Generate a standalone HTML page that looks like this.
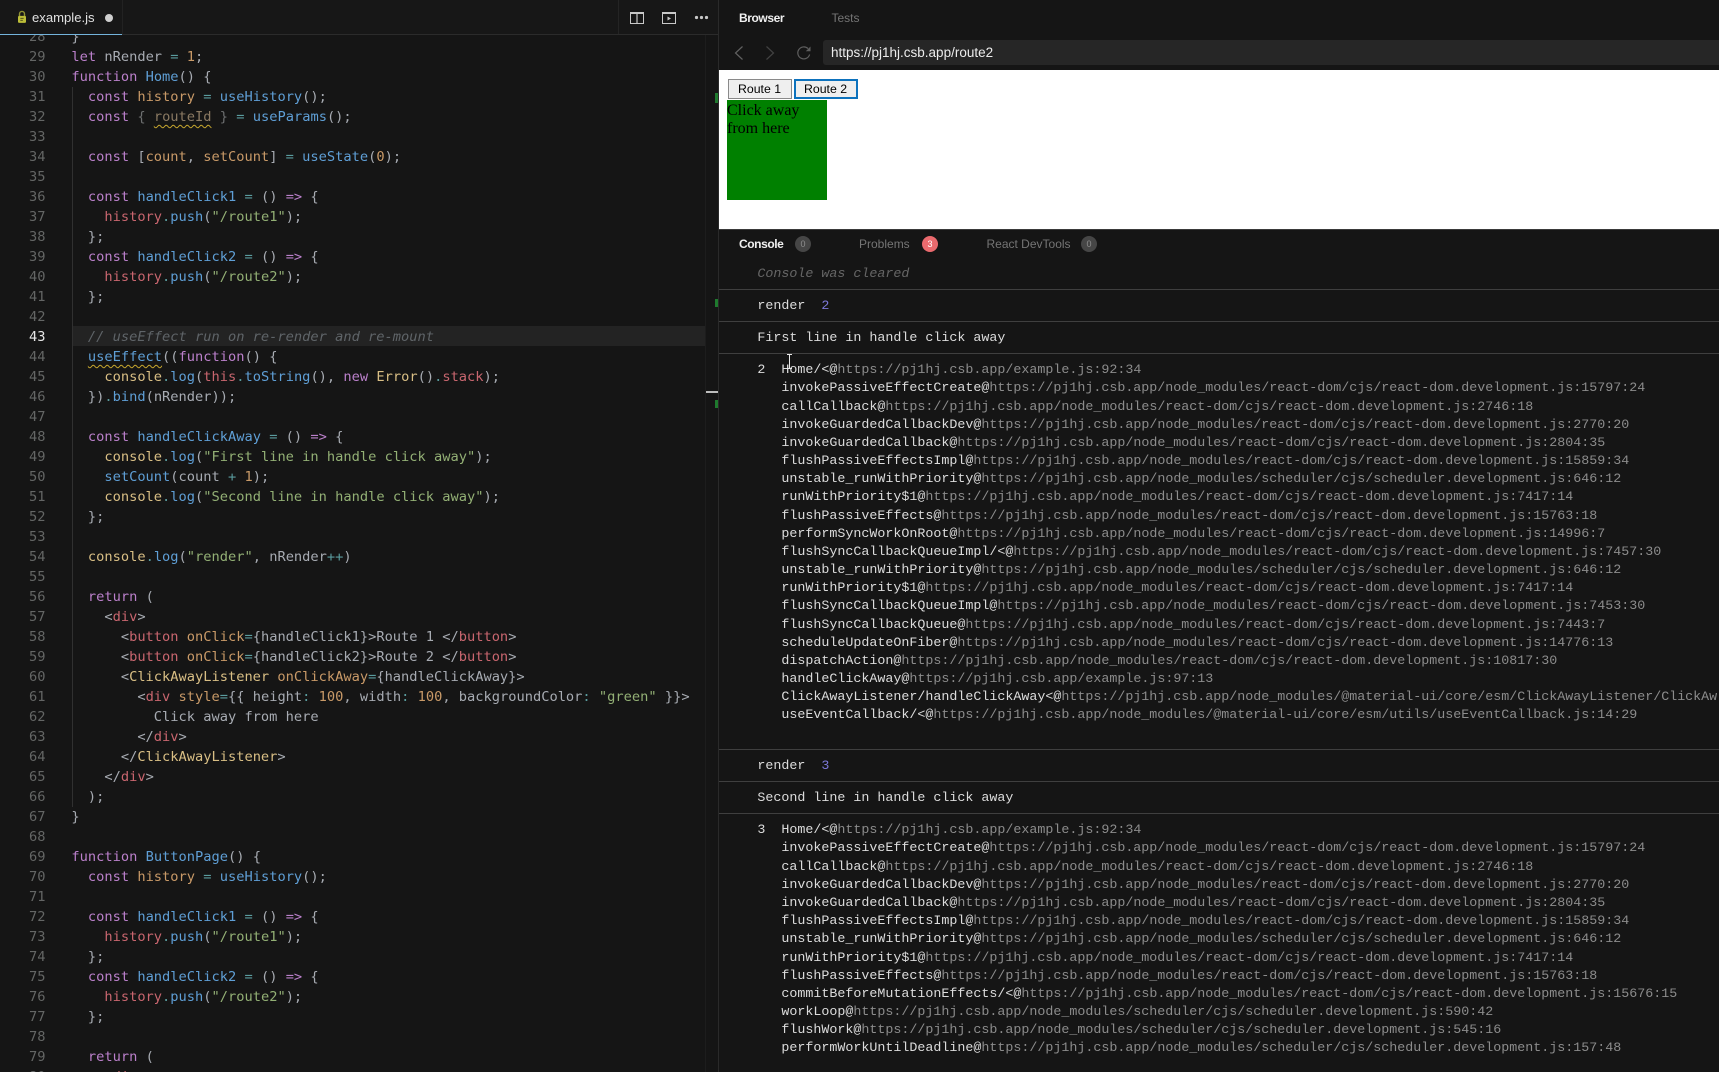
<!DOCTYPE html>
<html lang="en"><head><meta charset="utf-8"><title>example.js</title>
<style>
html,body{margin:0;padding:0;width:1719px;height:1072px;overflow:hidden;background:#151515}
body{position:relative}
*{box-sizing:border-box}
.abs{position:absolute}
#nums,#code{position:absolute;top:27px;font:13.7px/20px "DejaVu Sans Mono","Liberation Mono",monospace}
#nums{left:0;width:45.5px;text-align:right;color:#646665}
#nums div,#code div{height:20px;white-space:pre}
#code{left:71.4px;color:#a7abb2}
#clip{position:absolute;left:0;top:35px;width:705px;height:1037px;overflow:hidden}
#inner{position:absolute;left:0;top:-35px;width:705px;height:1072px}
.k{color:#bb80cb}.f{color:#5f9fd6}.v{color:#c99a68}.s{color:#93b075}.r{color:#c9666f}.y{color:#d9bf85}.o{color:#5a9c9e}.c{color:#5f6468;font-style:italic}
.w{text-decoration:underline wavy #c9a82e 1px;text-underline-offset:3px}
.con{position:absolute;left:757.4px;font:13.33px/18.17px "Liberation Mono",monospace;color:#dcdcdc;white-space:pre}
.stack{position:absolute;left:781.4px;font:13.33px/18.17px "Liberation Mono",monospace;color:#dcdcdc;white-space:pre;width:937px;overflow:hidden}
.stack a{color:#8c8c8c}
.sep{position:absolute;left:719px;width:1000px;height:1px;background:#3f3f3f}
.tab{position:absolute;font:12px/14px "Liberation Sans",sans-serif;color:#757575;white-space:pre}
.tab.on{color:#f0f0f0;font-weight:700;letter-spacing:-.42px}
.bdg{position:absolute;width:16px;height:16px;border-radius:50%;background:#464646;color:#8e8e8e;font:9px/16px "Liberation Sans",sans-serif;text-align:center;top:236px}
</style></head>
<body>
<!-- editor header -->
<div class="abs" style="left:0;top:0;width:719px;height:34px;background:#171717"></div>
<div class="abs" style="left:0;top:34px;width:719px;height:1px;background:#2b2b2b"></div>
<div class="abs" style="left:0;top:34px;width:122px;height:1px;background:#74b4dc"></div>
<div class="abs" style="left:122px;top:0;width:1px;height:34px;background:#222"></div>
<div class="abs" style="left:618px;top:0;width:1px;height:34px;background:#242424"></div>
<svg class="abs" style="left:17px;top:10px" width="10" height="15" viewBox="0 0 12 17"><path d="M3 7V4.2a3 3 0 0 1 6 0V7" fill="none" stroke="#8f9234" stroke-width="1.7"/><rect x="1.2" y="6.5" width="9.6" height="8.5" rx="1.5" fill="#bcbd38"/><path d="M4 9.5h4M4 12h3" stroke="#55561c" stroke-width="1.2"/></svg>
<div class="abs" style="left:32px;top:10px;font:13.1px/16px 'Liberation Sans',sans-serif;color:#e0e0e0">example.js</div>
<div class="abs" style="left:105px;top:14px;width:8px;height:8px;border-radius:50%;background:#cfcfcf"></div>
<svg class="abs" style="left:630px;top:12px" width="14" height="12" viewBox="0 0 14 12"><rect x=".5" y="1" width="13" height="10.5" fill="none" stroke="#c8c8c8"/><rect y="0" width="14" height="2" fill="#c8c8c8"/><path d="M7 1v10.5" stroke="#c8c8c8" stroke-width="1.2"/></svg>
<svg class="abs" style="left:662px;top:12px" width="14" height="12" viewBox="0 0 14 12"><rect x=".5" y="1" width="13" height="10.5" fill="none" stroke="#c8c8c8"/><rect y="0" width="14" height="2" fill="#c8c8c8"/><path d="M5.5 4.5l3.5 2-3.5 2z" fill="#c8c8c8"/></svg>
<svg class="abs" style="left:694px;top:15px" width="15" height="5" viewBox="0 0 15 5"><circle cx="2.5" cy="2.5" r="1.6" fill="#c8c8c8"/><circle cx="7.5" cy="2.5" r="1.6" fill="#c8c8c8"/><circle cx="12.5" cy="2.5" r="1.6" fill="#c8c8c8"/></svg>

<!-- code area -->
<div id="clip"><div id="inner">
<div class="abs" style="left:72px;top:326px;width:646px;height:20px;background:#232323"></div>
<div class="abs" style="left:72px;top:87px;width:1px;height:720px;background:#303030"></div>
<div id="nums"><div>28</div><div>29</div><div>30</div><div>31</div><div>32</div><div>33</div><div>34</div><div>35</div><div>36</div><div>37</div><div>38</div><div>39</div><div>40</div><div>41</div><div>42</div><div style="color:#e6e6e6">43</div><div>44</div><div>45</div><div>46</div><div>47</div><div>48</div><div>49</div><div>50</div><div>51</div><div>52</div><div>53</div><div>54</div><div>55</div><div>56</div><div>57</div><div>58</div><div>59</div><div>60</div><div>61</div><div>62</div><div>63</div><div>64</div><div>65</div><div>66</div><div>67</div><div>68</div><div>69</div><div>70</div><div>71</div><div>72</div><div>73</div><div>74</div><div>75</div><div>76</div><div>77</div><div>78</div><div>79</div><div>80</div></div>
<div id="code"><div>}</div>
<div><span class="k">let</span> nRender <span class="o">=</span> <span class="v">1</span>;</div>
<div><span class="k">function</span> <span class="f">Home</span>() {</div>
<div>  <span class="k">const</span> <span class="v">history</span> <span class="o">=</span> <span class="f">useHistory</span>();</div>
<div>  <span class="k">const</span> <span style="color:#6d6f70">{</span> <span class="w" style="color:#8b7a63">routeId</span> <span style="color:#6d6f70">}</span> <span class="o">=</span> <span class="f">useParams</span>();</div>
<div> </div>
<div>  <span class="k">const</span> [<span class="v">count</span>, <span class="v">setCount</span>] <span class="o">=</span> <span class="f">useState</span>(<span class="v">0</span>);</div>
<div> </div>
<div>  <span class="k">const</span> <span class="f">handleClick1</span> <span class="o">=</span> () <span class="k">=&gt;</span> {</div>
<div>    <span class="r">history</span><span class="o">.</span><span class="f">push</span>(<span class="s">"/route1"</span>);</div>
<div>  };</div>
<div>  <span class="k">const</span> <span class="f">handleClick2</span> <span class="o">=</span> () <span class="k">=&gt;</span> {</div>
<div>    <span class="r">history</span><span class="o">.</span><span class="f">push</span>(<span class="s">"/route2"</span>);</div>
<div>  };</div>
<div> </div>
<div>  <span class="c">// useEffect run on re-render and re-mount</span></div>
<div>  <span class="f w">useEffect</span>((<span class="k">function</span>() {</div>
<div>    <span class="y">console</span><span class="o">.</span><span class="f">log</span>(<span class="r">this</span><span class="o">.</span><span class="f">toString</span>(), <span class="k">new</span> <span class="y">Error</span>()<span class="o">.</span><span class="r">stack</span>);</div>
<div>  })<span class="o">.</span><span class="f">bind</span>(nRender));</div>
<div> </div>
<div>  <span class="k">const</span> <span class="f">handleClickAway</span> <span class="o">=</span> () <span class="k">=&gt;</span> {</div>
<div>    <span class="y">console</span><span class="o">.</span><span class="f">log</span>(<span class="s">"First line in handle click away"</span>);</div>
<div>    <span class="f">setCount</span>(count <span class="o">+</span> <span class="v">1</span>);</div>
<div>    <span class="y">console</span><span class="o">.</span><span class="f">log</span>(<span class="s">"Second line in handle click away"</span>);</div>
<div>  };</div>
<div> </div>
<div>  <span class="y">console</span><span class="o">.</span><span class="f">log</span>(<span class="s">"render"</span>, nRender<span class="o">++</span>)</div>
<div> </div>
<div>  <span class="k">return</span> (</div>
<div>    &lt;<span class="r">div</span>&gt;</div>
<div>      &lt;<span class="r">button</span> <span class="v">onClick</span><span class="o">=</span>{handleClick1}&gt;Route 1 &lt;/<span class="r">button</span>&gt;</div>
<div>      &lt;<span class="r">button</span> <span class="v">onClick</span><span class="o">=</span>{handleClick2}&gt;Route 2 &lt;/<span class="r">button</span>&gt;</div>
<div>      &lt;<span class="y">ClickAwayListener</span> <span class="v">onClickAway</span><span class="o">=</span>{handleClickAway}&gt;</div>
<div>        &lt;<span class="r">div</span> <span class="v">style</span><span class="o">=</span>{{ height<span class="o">:</span> <span class="v">100</span>, width<span class="o">:</span> <span class="v">100</span>, backgroundColor<span class="o">:</span> <span class="s">"green"</span> }}&gt;</div>
<div>          Click away from here</div>
<div>        &lt;/<span class="r">div</span>&gt;</div>
<div>      &lt;/<span class="y">ClickAwayListener</span>&gt;</div>
<div>    &lt;/<span class="r">div</span>&gt;</div>
<div>  );</div>
<div>}</div>
<div> </div>
<div><span class="k">function</span> <span class="f">ButtonPage</span>() {</div>
<div>  <span class="k">const</span> <span class="v">history</span> <span class="o">=</span> <span class="f">useHistory</span>();</div>
<div> </div>
<div>  <span class="k">const</span> <span class="f">handleClick1</span> <span class="o">=</span> () <span class="k">=&gt;</span> {</div>
<div>    <span class="r">history</span><span class="o">.</span><span class="f">push</span>(<span class="s">"/route1"</span>);</div>
<div>  };</div>
<div>  <span class="k">const</span> <span class="f">handleClick2</span> <span class="o">=</span> () <span class="k">=&gt;</span> {</div>
<div>    <span class="r">history</span><span class="o">.</span><span class="f">push</span>(<span class="s">"/route2"</span>);</div>
<div>  };</div>
<div> </div>
<div>  <span class="k">return</span> (</div>
<div>    &lt;<span class="r">div</span>&gt;</div></div>
</div></div>

<!-- overview ruler -->
<div class="abs" style="left:705px;top:35px;width:1px;height:1037px;background:#1d1d1d"></div>
<div class="abs" style="left:718px;top:0;width:1px;height:1072px;background:#2a2a2a"></div>
<div class="abs" style="left:706px;top:391px;width:12px;height:2px;background:#bdbdbd"></div>
<div class="abs" style="left:715px;top:93px;width:3px;height:10px;background:#1f7a2e"></div>
<div class="abs" style="left:715px;top:299px;width:3px;height:8px;background:#1f7a2e"></div>
<div class="abs" style="left:715px;top:400px;width:3px;height:8px;background:#1f7a2e"></div>

<!-- browser -->
<div class="tab on" style="left:739px;top:11px">Browser</div>
<div class="tab" style="left:831.5px;top:11px">Tests</div>
<svg class="abs" style="left:733px;top:45px" width="12" height="16" viewBox="0 0 12 16"><path d="M9.5 1.5L2.5 8l7 6.5" fill="none" stroke="#616161" stroke-width="1.2"/></svg>
<svg class="abs" style="left:764px;top:45px" width="12" height="16" viewBox="0 0 12 16"><path d="M2.5 1.5l7 6.5-7 6.5" fill="none" stroke="#424242" stroke-width="1.2"/></svg>
<svg class="abs" style="left:796px;top:45px" width="16" height="16" viewBox="0 0 16 16"><path d="M13.6 9.5A6 6 0 1 1 12 3.6" fill="none" stroke="#5e5e5e" stroke-width="1.2"/><path d="M14.5 1.5v4.7H9.8z" fill="#5e5e5e"/></svg>
<div class="abs" style="left:823px;top:40px;width:896px;height:25px;background:#262626;border-radius:3px 0 0 3px"></div>
<div class="abs" style="left:831px;top:45px;font:13.5px/16px 'Liberation Sans',sans-serif;color:#ececec">https://pj1hj.csb.app/route2</div>
<div class="abs" style="left:719px;top:70px;width:1000px;height:158.5px;background:#fff"></div>
<div class="abs" style="left:719px;top:228.5px;width:1000px;height:1px;background:#3a3a3a"></div>
<div class="abs" style="left:728px;top:79px;width:64px;height:20px;background:#efefef;border:1px solid #8a8a8a"></div>
<div class="abs" style="left:738px;top:82px;font:12.3px/14px 'Liberation Sans',sans-serif;color:#000">Route 1</div>
<div class="abs" style="left:794px;top:79px;width:64px;height:20px;background:#efefef;border:2px solid #0d72bd"></div>
<div class="abs" style="left:804px;top:82px;font:12.3px/14px 'Liberation Sans',sans-serif;color:#000">Route 2</div>
<div class="abs" style="left:727px;top:100px;width:100px;height:100px;background:#008000;color:#000;font:16px/18.2px 'Liberation Serif',serif;white-space:pre;padding-top:2px">Click away
from here</div>

<!-- console tabs -->
<div class="tab on" style="left:739px;top:237px">Console</div>
<div class="bdg" style="left:795px">0</div>
<div class="tab" style="left:859px;top:237px">Problems</div>
<div class="bdg" style="left:922px;background:#ea6a6e;color:#fff">3</div>
<div class="tab" style="left:986.5px;top:237px">React DevTools</div>
<div class="bdg" style="left:1081px">0</div>

<!-- console -->
<div class="con" style="top:266px;color:#666;font-style:italic">Console was cleared</div>
<div class="sep" style="top:289px"></div>
<div class="con" style="top:298px">render  <span style="color:#7c78d8">2</span></div>
<div class="sep" style="top:321px"></div>
<div class="con" style="top:330px">First line in handle click away</div>
<div class="sep" style="top:353px"></div>
<div class="con" style="top:362.4px">2</div>
<div class="stack" style="top:362.2px;height:380px">Home/&lt;@<a>https://pj1hj.csb.app/example.js:92:34</a>
invokePassiveEffectCreate@<a>https://pj1hj.csb.app/node_modules/react-dom/cjs/react-dom.development.js:15797:24</a>
callCallback@<a>https://pj1hj.csb.app/node_modules/react-dom/cjs/react-dom.development.js:2746:18</a>
invokeGuardedCallbackDev@<a>https://pj1hj.csb.app/node_modules/react-dom/cjs/react-dom.development.js:2770:20</a>
invokeGuardedCallback@<a>https://pj1hj.csb.app/node_modules/react-dom/cjs/react-dom.development.js:2804:35</a>
flushPassiveEffectsImpl@<a>https://pj1hj.csb.app/node_modules/react-dom/cjs/react-dom.development.js:15859:34</a>
unstable_runWithPriority@<a>https://pj1hj.csb.app/node_modules/scheduler/cjs/scheduler.development.js:646:12</a>
runWithPriority$1@<a>https://pj1hj.csb.app/node_modules/react-dom/cjs/react-dom.development.js:7417:14</a>
flushPassiveEffects@<a>https://pj1hj.csb.app/node_modules/react-dom/cjs/react-dom.development.js:15763:18</a>
performSyncWorkOnRoot@<a>https://pj1hj.csb.app/node_modules/react-dom/cjs/react-dom.development.js:14996:7</a>
flushSyncCallbackQueueImpl/&lt;@<a>https://pj1hj.csb.app/node_modules/react-dom/cjs/react-dom.development.js:7457:30</a>
unstable_runWithPriority@<a>https://pj1hj.csb.app/node_modules/scheduler/cjs/scheduler.development.js:646:12</a>
runWithPriority$1@<a>https://pj1hj.csb.app/node_modules/react-dom/cjs/react-dom.development.js:7417:14</a>
flushSyncCallbackQueueImpl@<a>https://pj1hj.csb.app/node_modules/react-dom/cjs/react-dom.development.js:7453:30</a>
flushSyncCallbackQueue@<a>https://pj1hj.csb.app/node_modules/react-dom/cjs/react-dom.development.js:7443:7</a>
scheduleUpdateOnFiber@<a>https://pj1hj.csb.app/node_modules/react-dom/cjs/react-dom.development.js:14776:13</a>
dispatchAction@<a>https://pj1hj.csb.app/node_modules/react-dom/cjs/react-dom.development.js:10817:30</a>
handleClickAway@<a>https://pj1hj.csb.app/example.js:97:13</a>
ClickAwayListener/handleClickAway&lt;@<a>https://pj1hj.csb.app/node_modules/@material-ui/core/esm/ClickAwayListener/ClickAwayListener.js:50:9</a>
useEventCallback/&lt;@<a>https://pj1hj.csb.app/node_modules/@material-ui/core/esm/utils/useEventCallback.js:14:29</a></div>
<svg class="abs" style="left:786px;top:354px" width="7" height="15" viewBox="0 0 7 15"><path d="M1 .5h5M3.5.5v14M1 14.5h5" stroke="#e8e8e8" fill="none"/></svg>
<div class="sep" style="top:749px"></div>
<div class="con" style="top:758.4px">render  <span style="color:#7c78d8">3</span></div>
<div class="sep" style="top:781px"></div>
<div class="con" style="top:790.4px">Second line in handle click away</div>
<div class="sep" style="top:813px"></div>
<div class="con" style="top:822.3px">3</div>
<div class="stack" style="top:822.3px;height:240px">Home/&lt;@<a>https://pj1hj.csb.app/example.js:92:34</a>
invokePassiveEffectCreate@<a>https://pj1hj.csb.app/node_modules/react-dom/cjs/react-dom.development.js:15797:24</a>
callCallback@<a>https://pj1hj.csb.app/node_modules/react-dom/cjs/react-dom.development.js:2746:18</a>
invokeGuardedCallbackDev@<a>https://pj1hj.csb.app/node_modules/react-dom/cjs/react-dom.development.js:2770:20</a>
invokeGuardedCallback@<a>https://pj1hj.csb.app/node_modules/react-dom/cjs/react-dom.development.js:2804:35</a>
flushPassiveEffectsImpl@<a>https://pj1hj.csb.app/node_modules/react-dom/cjs/react-dom.development.js:15859:34</a>
unstable_runWithPriority@<a>https://pj1hj.csb.app/node_modules/scheduler/cjs/scheduler.development.js:646:12</a>
runWithPriority$1@<a>https://pj1hj.csb.app/node_modules/react-dom/cjs/react-dom.development.js:7417:14</a>
flushPassiveEffects@<a>https://pj1hj.csb.app/node_modules/react-dom/cjs/react-dom.development.js:15763:18</a>
commitBeforeMutationEffects/&lt;@<a>https://pj1hj.csb.app/node_modules/react-dom/cjs/react-dom.development.js:15676:15</a>
workLoop@<a>https://pj1hj.csb.app/node_modules/scheduler/cjs/scheduler.development.js:590:42</a>
flushWork@<a>https://pj1hj.csb.app/node_modules/scheduler/cjs/scheduler.development.js:545:16</a>
performWorkUntilDeadline@<a>https://pj1hj.csb.app/node_modules/scheduler/cjs/scheduler.development.js:157:48</a></div>
</body></html>
